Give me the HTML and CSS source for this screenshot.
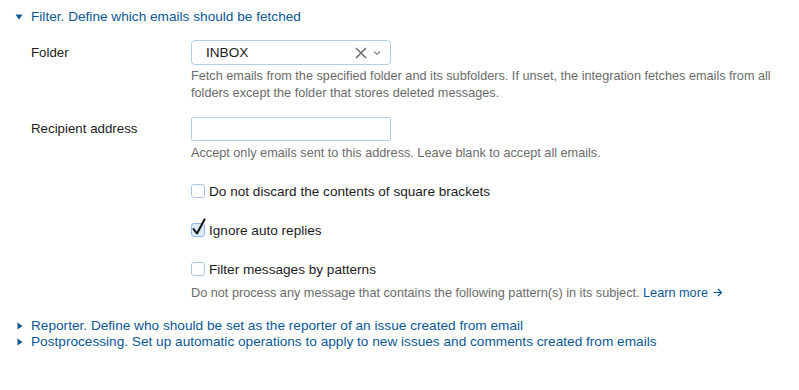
FILE: index.html
```html
<!DOCTYPE html>
<html lang="en">
<head>
<meta charset="utf-8">
<title>Email integration filter</title>
<link rel="stylesheet" href="styles.css">
</head>
<body>
<section class="panel">
  <div class="toggle open"><span class="caret"><svg width="8" height="6" viewBox="0 0 8 6"><path d="M0.5 0.5 L7.5 0.5 L4 5.5 Z" fill="#0b5894"/></svg></span><span class="toggle-text">Filter. Define which emails should be fetched</span></div>
  <div class="form">
    <div class="row row-folder">
      <div class="label">Folder</div>
      <div class="field">
        <div class="select">
          <span class="select-value">INBOX</span>
          <svg class="clear" width="12" height="12" viewBox="0 0 12 12"><path d="M1 1 L11 11 M11 1 L1 11" stroke="#6f6f6f" stroke-width="1.6" fill="none"/></svg>
          <svg class="chev" width="8" height="6" viewBox="0 0 8 6"><path d="M1 1.5 L4 4.5 L7 1.5" stroke="#8a8a8a" stroke-width="1.2" fill="none"/></svg>
        </div>
        <p class="help">Fetch emails from the specified folder and its subfolders. If unset, the integration fetches emails from all folders except the folder that stores deleted messages.</p>
      </div>
    </div>
    <div class="row row-recipient">
      <div class="label">Recipient address</div>
      <div class="field">
        <div class="input"></div>
        <p class="help help-one">Accept only emails sent to this address. Leave blank to accept all emails.</p>
      </div>
    </div>
    <div class="row check-row first">
      <div class="label"></div>
      <div class="field check"><span class="box"></span><span>Do not discard the contents of square brackets</span></div>
    </div>
    <div class="row check-row">
      <div class="label"></div>
      <div class="field check"><span class="box checked"><svg class="tick" width="16" height="18" viewBox="0 0 16 18"><path d="M2.5 11 L6 15.5 L13.5 1.5" stroke="#111" stroke-width="2" fill="none" stroke-linecap="round" stroke-linejoin="round"/></svg></span><span>Ignore auto replies</span></div>
    </div>
    <div class="row check-row">
      <div class="label"></div>
      <div class="field">
        <div class="check"><span class="box"></span><span>Filter messages by patterns</span></div>
        <p class="help help-pattern">Do not process any message that contains the following pattern(s) in its subject. <a class="link" href="#">Learn more <svg class="arrow" width="10" height="9" viewBox="0 0 10 9"><path d="M0.5 4.5 H8.5 M5 1 L8.5 4.5 L5 8" stroke="#0b5894" stroke-width="1.2" fill="none"/></svg></a></p>
      </div>
    </div>
  </div>
  <div class="toggle closed first-closed"><span class="caret"><svg width="6" height="8" viewBox="0 0 6 8"><path d="M0.5 0.5 L5.5 4 L0.5 7.5 Z" fill="#0b5894"/></svg></span><span class="toggle-text">Reporter. Define who should be set as the reporter of an issue created from email</span></div>
  <div class="toggle closed"><span class="caret"><svg width="6" height="8" viewBox="0 0 6 8"><path d="M0.5 0.5 L5.5 4 L0.5 7.5 Z" fill="#0b5894"/></svg></span><span class="toggle-text">Postprocessing. Set up automatic operations to apply to new issues and comments created from emails</span></div>
</section>
</body>
</html>
```
FILE: styles.css
```css
html, body {
  margin: 0;
  padding: 0;
  background: #ffffff;
}
body {
  font-family: "Liberation Sans", Arial, sans-serif;
  font-size: 13.6px;
  color: #1c1c1c;
}
.panel {
  padding-top: 7px;
}
.toggle {
  display: flex;
  align-items: center;
  color: #0b5894;
  height: 20px;
  line-height: 20px;
  font-size: 13.65px;
}
.toggle.closed {
  height: 16px;
  line-height: 16px;
}
.first-closed {
  margin-top: 16px;
}
.caret {
  width: 31px;
  box-sizing: border-box;
  padding-left: 15px;
  display: flex;
  align-items: center;
}
.closed .caret {
  padding-left: 17px;
}
.form {
  margin-top: 13px;
}
.row {
  display: flex;
  padding-left: 31px;
}
.label {
  width: 160px;
  flex: none;
  line-height: 25px;
  font-size: 13.3px;
}
.row-recipient {
  margin-top: 15px;
}
.row-recipient .label {
  line-height: 24px;
}
.field {
  flex: 1;
}
.select {
  width: 200px;
  height: 25px;
  box-sizing: border-box;
  border: 1px solid #b3cfe8;
  border-radius: 4px;
  display: flex;
  align-items: center;
  padding-left: 14px;
  padding-right: 9px;
}
.select-value {
  flex: 1;
  color: #1c1c1c;
}
.clear {
  margin-right: 6px;
}
.input {
  width: 200px;
  height: 24px;
  box-sizing: border-box;
  border: 1px solid #b3cfe8;
  border-radius: 2px;
}
.help {
  margin: 3px 0 0 0;
  font-size: 12.7px;
  line-height: 17px;
  color: #6b6b6b;
  padding-right: 16px;
}
.help-one {
  margin-top: 4px;
}
.help-pattern {
  margin-top: 6px;
}
.link {
  color: #0b5894;
  text-decoration: none;
}
.arrow {
  vertical-align: 0;
  margin-left: 2px;
}
.check-row {
  margin-top: 19px;
}
.check-row.first {
  margin-top: 19px;
}
.check {
  display: flex;
  align-items: center;
  height: 20px;
}
.box {
  position: relative;
  width: 14px;
  height: 14px;
  box-sizing: border-box;
  border: 1px solid #a9c6e4;
  border-radius: 3px;
  margin-right: 4px;
  flex: none;
}
.box.checked {
  background: #dcebfb;
  border-color: #8fb8e4;
}
.tick {
  position: absolute;
  left: -1px;
  top: -6px;
}
```
